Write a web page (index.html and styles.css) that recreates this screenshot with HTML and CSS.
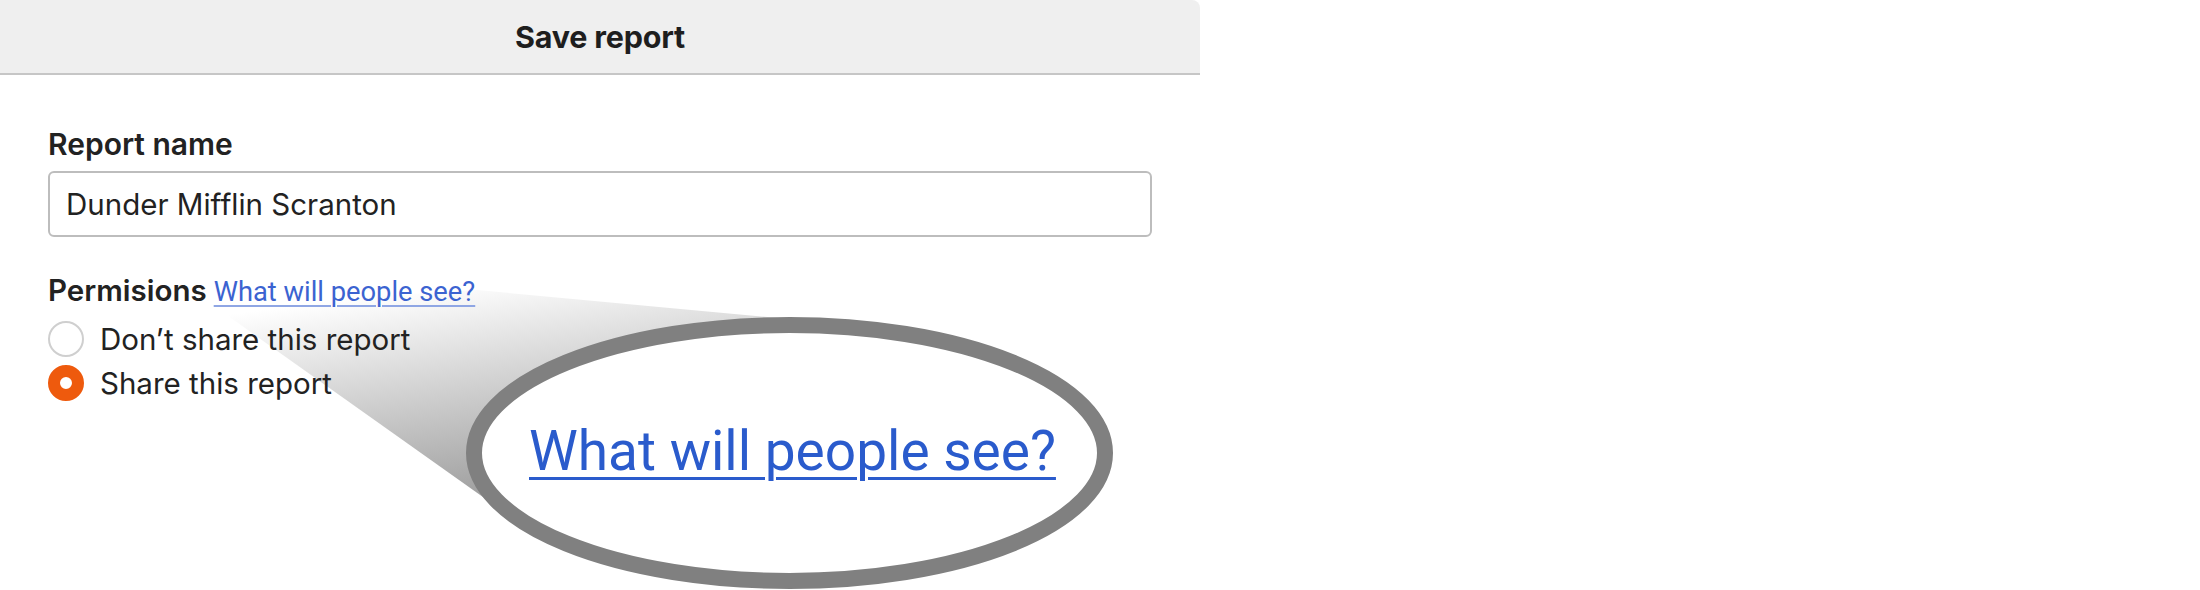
FILE: index.html
```html
<!DOCTYPE html>
<html lang="en">
<head>
<meta charset="utf-8">
<title>Save report</title>
<link rel="stylesheet" href="styles.css">
</head>
<body>
<svg class="magnifier" width="2200" height="590" viewBox="0 0 2200 590" xmlns="http://www.w3.org/2000/svg">
  <defs>
    <linearGradient id="cone" gradientUnits="userSpaceOnUse" x1="330" y1="300" x2="363" y2="528">
      <stop offset="0" stop-color="#ffffff"/>
      <stop offset="1" stop-color="#999999"/>
    </linearGradient>
  </defs>
  <polygon points="214,306 477,290 800,320 790,453 490,502" fill="url(#cone)"/>
  <ellipse cx="789.5" cy="453" rx="315.5" ry="128" fill="#ffffff" stroke="#808080" stroke-width="16"/>
</svg>
<div class="zoom-text">What will people see?</div>

<div class="dialog">
  <div class="header">
    <h1 class="title">Save report</h1>
  </div>
  <div class="content">
    <label class="field-label" for="name">Report name</label>
    <div class="input" id="name">Dunder Mifflin Scranton</div>
    <div class="perm-row">
      <span class="field-label inline">Permisions</span>
      <a class="link" href="#">What will people see?</a>
    </div>
    <div class="radio-row">
      <span class="radio"></span>
      <span class="radio-label">Don’t share this report</span>
    </div>
    <div class="radio-row">
      <span class="radio checked"></span>
      <span class="radio-label">Share this report</span>
    </div>
  </div>
</div>
</body>
</html>
```

FILE: styles.css
```css
html, body {
  margin: 0;
  padding: 0;
  background: #ffffff;
}
body {
  position: relative;
  width: 2200px;
  height: 590px;
  overflow: hidden;
  font-family: "Inter", "Liberation Sans", sans-serif;
  color: #222222;
}
.magnifier {
  position: absolute;
  left: 0;
  top: 0;
  z-index: 0;
}
.zoom-text {
  position: absolute;
  left: 529px;
  top: 419px;
  z-index: 2;
  font-family: "Roboto", "Liberation Sans", sans-serif;
  font-size: 55px;
  line-height: 64px;
  color: #2a5bcc;
  text-decoration: underline;
  text-decoration-thickness: 3px;
  text-underline-offset: 7px;
  white-space: nowrap;
}
.dialog {
  position: relative;
  z-index: 1;
  width: 1200px;
}
.header {
  height: 73px;
  background: #efefef;
  border-bottom: 2px solid #c6c6c6;
  border-top-right-radius: 8px;
  display: flex;
  align-items: center;
  justify-content: center;
}
.title {
  margin: 0;
  font-size: 30.5px;
  font-weight: 700;
  color: #1e1e1e;
  letter-spacing: -0.2px;
}
.content {
  padding: 51px 48px 0 48px;
  display: flex;
  flex-direction: column;
}
.field-label {
  display: block;
  font-size: 30px;
  font-weight: 600;
  line-height: 36px;
  color: #222222;
}
.field-label.inline {
  display: inline;
  font-size: 29.5px;
}
.input {
  margin-top: 9px;
  height: 66px;
  box-sizing: border-box;
  border: 2px solid #bdbdbd;
  border-radius: 6px;
  padding-left: 16px;
  display: flex;
  align-items: center;
  font-size: 29.5px;
  color: #222222;
}
.perm-row {
  margin-top: 35px;
  line-height: 36px;
  display: flex;
  align-items: baseline;
  gap: 7px;
}
.link {
  font-family: "Roboto", "Liberation Sans", sans-serif;
  font-size: 27.3px;
  color: #3b63d1;
  text-decoration: underline;
  text-decoration-color: #8fa6e4;
  text-decoration-thickness: 2px;
  text-underline-offset: 4px;
}
.radio-row {
  height: 44px;
  display: flex;
  align-items: center;
  gap: 16px;
}
.perm-row + .radio-row {
  margin-top: 7px;
}
.radio {
  width: 36px;
  height: 36px;
  box-sizing: border-box;
  border-radius: 50%;
  border: 2px solid #cfcfcf;
  background: #ffffff;
  flex: none;
}
.radio.checked {
  border: 12px solid #ee5a0d;
}
.radio-label {
  font-size: 29.5px;
  color: #222222;
}
```
